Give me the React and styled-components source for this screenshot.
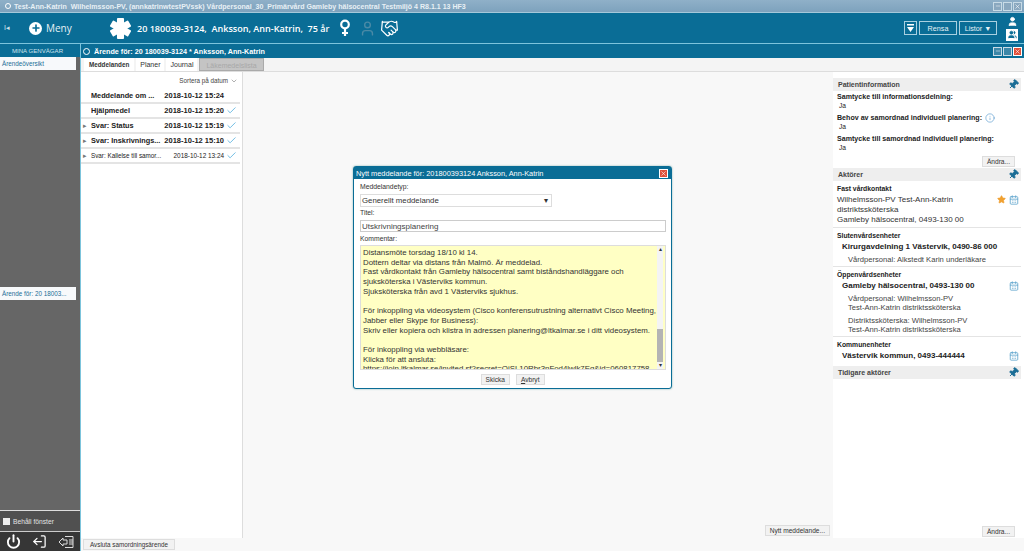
import styled, { createGlobalStyle } from 'styled-components';
import { Plus, Star, Info, Check, CalendarDays, Power, LogOut, User, Users, Handshake, Pin, X, Minus, ChevronDown } from 'lucide-react';

const GlobalStyle = createGlobalStyle`
  html, body { margin: 0; padding: 0; height: 100%; overflow: hidden; }
  body { font-family: "Liberation Sans", Arial, sans-serif; font-size: 8px; color: #222; background: #f7f7f7; }
  * { box-sizing: border-box; }
`;

const messages = [
  { title: 'Meddelande om ...', date: '2018-10-12 15:24', bold: true, arrow: false, check: false },
  { title: 'Hjälpmedel', date: '2018-10-12 15:20', bold: true, arrow: false, check: true },
  { title: 'Svar: Status', date: '2018-10-12 15:19', bold: true, arrow: true, check: true },
  { title: 'Svar: Inskrivnings...', date: '2018-10-12 15:10', bold: true, arrow: true, check: true },
  { title: 'Svar: Kallelse till samor...', date: '2018-10-12 13:24', bold: false, arrow: true, check: true },
];

const comment = [
  'Distansmöte torsdag 18/10 kl 14.',
  'Dottern deltar via distans från Malmö. Är meddelad.',
  'Fast vårdkontakt  från Gamleby hälsocentral samt biståndshandläggare och',
  'sjuksköterska i Västerviks kommun.',
  'Sjuksköterska från avd 1 Västerviks sjukhus.',
  '',
  'För inkoppling via videosystem (Cisco konferensutrustning alternativt Cisco Meeting,',
  'Jabber eller Skype for Business):',
  'Skriv eller kopiera och klistra in adressen planering@ltkalmar.se i ditt videosystem.',
  '',
  'För inkoppling via webbläsare:',
  'Klicka för att ansluta:',
  'https://join.ltkalmar.se/invited.sf?secret=QiSL10Rbr3nFod4lwlk7Eg&id=060817758',
];

const App = () => (
  <Page>
    <GlobalStyle />
    <TitleBar>
      <TitleText><Ring />Test-Ann-Katrin  Wilhelmsson-PV, (annkatrinwtestPVssk) Vårdpersonal_30_Primärvård Gamleby hälsocentral Testmiljö 4 R8.1.1 13 HF3</TitleText>
      <WindowButtons>
        <WindowButton $muted><Minus size={6} /></WindowButton>
        <WindowButton $muted />
        <WindowButton $muted><X size={7} /></WindowButton>
      </WindowButtons>
    </TitleBar>

    <Header>
      <Collapse>I◂</Collapse>
      <MenuButton>
        <MenuIcon><Plus size={10} strokeWidth={4} color="#0a6d96" /></MenuIcon>
        Meny
      </MenuButton>
      <StarOfLife viewBox="0 0 24 24">
        <g fill="#fff">
          <rect x="8.3" y="1" width="7.4" height="22" rx="1" />
          <rect x="8.3" y="1" width="7.4" height="22" rx="1" transform="rotate(60 12 12)" />
          <rect x="8.3" y="1" width="7.4" height="22" rx="1" transform="rotate(120 12 12)" />
        </g>
      </StarOfLife>
      <PatientName>20 180039-3124,  Anksson, Ann-Katrin,  75 år</PatientName>
      <HeaderIcons>
        <FemaleIcon width="12" height="18" viewBox="0 0 12 18" fill="none" stroke="#fff" strokeWidth="2.2">
          <circle cx="6" cy="5.5" r="3.8" />
          <path d="M6 9.5V17M3 14h6" />
        </FemaleIcon>
        <User size={17} color="#4a8aa6" />
        <Handshake size={19} color="#fff" strokeWidth={1.5} />
      </HeaderIcons>
      <HeaderActions>
        <FilterButton>
          <svg width="7" height="9" viewBox="0 0 7 9" fill="#fff">
            <rect width="7" height="1.5" />
            <path d="M0 3h7L3.5 8z" />
          </svg>
        </FilterButton>
        <ActionButton $width={38}>Rensa</ActionButton>
        <ActionButton $width={38}>Listor ▼</ActionButton>
        <UserStack>
          <User size={11} color="#fff" fill="#fff" />
          <UserBadge><Users size={9} color="#0a6d96" fill="#0a6d96" /></UserBadge>
        </UserStack>
      </HeaderActions>
    </Header>

    <Body>
      <Sidebar>
        <SidebarTitle>MINA GENVÄGAR</SidebarTitle>
        <SidebarItem>Ärendeöversikt</SidebarItem>
        <SidebarFill>
          <SidebarItem>Ärende för: 20 18003...</SidebarItem>
        </SidebarFill>
        <KeepWindow><KeepBox />Behåll fönster</KeepWindow>
        <SidebarFooter>
          <Power size={15} strokeWidth={3} color="#fff" />
          <LogOut size={15} strokeWidth={2} color="#fff" style={{ transform: 'scaleX(-1)' }} />
          <svg width="16" height="14" viewBox="0 0 16 14" fill="none" stroke="#ddd" strokeWidth="1">
            <path d="M1 7l4-4v2h4v4H5v2z" />
            <path d="M7 1.5h8v11H7M11 5h4M11 7h4M11 9h4" />
          </svg>
        </SidebarFooter>
      </Sidebar>

      <Main>
        <PanelHeader>
          <HeaderTitle><PanelRing />Ärende för: 20 180039-3124 * Anksson, Ann-Katrin</HeaderTitle>
          <WindowButtons>
            <WindowButton><Minus size={6} /></WindowButton>
            <WindowButton />
            <WindowButton $close><X size={7} /></WindowButton>
          </WindowButtons>
        </PanelHeader>
        <Tabs>
          <Tab $active>Meddelanden</Tab>
          <Tab>Planer</Tab>
          <Tab>Journal</Tab>
          <Tab $disabled>Läkemedelslista</Tab>
        </Tabs>
        <Content>
          <MessageColumn>
            <SortRow>Sortera på datum <ChevronDown size={8} color="#888" /></SortRow>
            {messages.map((m) => (
              <MessageRow key={m.date}>
                <Arrow>{m.arrow ? '▸' : ''}</Arrow>
                <MessageTitle $bold={m.bold}>{m.title}</MessageTitle>
                <MessageDate $bold={m.bold}>{m.date}</MessageDate>
                <CheckSlot>{m.check && <Check size={11} color="#3fa6da" strokeWidth={1.6} />}</CheckSlot>
              </MessageRow>
            ))}
          </MessageColumn>
          <Middle>
            <SmallButton>Nytt meddelande...</SmallButton>
          </Middle>
          <RightPanel>
            <SectionBar>Patientinformation<PinIcon /></SectionBar>
            <InfoLabel>Samtycke till informationsdelning:</InfoLabel>
            <InfoValue>Ja</InfoValue>
            <InfoLabel>Behov av samordnad individuell planering: <Info size={10} color="#2a7fc0" strokeWidth={1.2} style={{ marginLeft: 3 }} /></InfoLabel>
            <InfoValue>Ja</InfoValue>
            <InfoLabel>Samtycke till samordnad individuell planering:</InfoLabel>
            <InfoValue>Ja</InfoValue>
            <RightButtonRow><SmallButton>Ändra...</SmallButton></RightButtonRow>

            <SectionBar>Aktörer<PinIcon /></SectionBar>
            <Group>
              <GroupTitle>Fast vårdkontakt</GroupTitle>
              <ContactRow>
                <ContactText>
                  Wilhelmsson-PV Test-Ann-Katrin<br />distriktssköterska<br />Gamleby hälsocentral, 0493-130 00
                </ContactText>
                <Star size={9} color="#f0a030" fill="#f0a030" />
                <CalendarDays size={10} color="#5fa5cc" />
              </ContactRow>
            </Group>
            <Group>
              <GroupTitle>Slutenvårdsenheter</GroupTitle>
              <UnitName>Kirurgavdelning 1 Västervik, 0490-86 000</UnitName>
              <UnitPerson>Vårdpersonal: Alkstedt Karin underläkare</UnitPerson>
            </Group>
            <Group>
              <GroupTitle>Öppenvårdsenheter</GroupTitle>
              <ContactRow>
                <UnitName>Gamleby hälsocentral, 0493-130 00</UnitName>
                <CalendarDays size={10} color="#5fa5cc" />
              </ContactRow>
              <UnitPerson>Vårdpersonal: Wilhelmsson-PV<br />Test-Ann-Katrin distriktssköterska</UnitPerson>
              <UnitPerson>Distriktssköterska: Wilhelmsson-PV<br />Test-Ann-Katrin distriktssköterska</UnitPerson>
            </Group>
            <Group $last>
              <GroupTitle>Kommunenheter</GroupTitle>
              <ContactRow>
                <UnitName>Västervik kommun, 0493-444444</UnitName>
                <CalendarDays size={10} color="#5fa5cc" />
              </ContactRow>
            </Group>
            <SectionBar>Tidigare aktörer<PinIcon /></SectionBar>
            <RightSpacer />
            <RightButtonRow><SmallButton>Ändra...</SmallButton></RightButtonRow>
          </RightPanel>
        </Content>
        <Footer><FooterButton>Avsluta samordningsärende</FooterButton></Footer>
      </Main>
    </Body>

    <Dialog>
      <DialogTitle>
        Nytt meddelande för: 201800393124 Anksson, Ann-Katrin
        <WindowButton $close><X size={7} /></WindowButton>
      </DialogTitle>
      <DialogBody>
        <FieldLabel>Meddelandetyp:</FieldLabel>
        <TypeSelect>Generellt meddelande<span>▾</span></TypeSelect>
        <FieldLabel>Titel:</FieldLabel>
        <TitleInput>Utskrivningsplanering</TitleInput>
        <FieldLabel>Kommentar:</FieldLabel>
        <CommentBox>
          <CommentText>
            {comment.map((line, i) => <CommentLine key={i}>{line || '\u00a0'}</CommentLine>)}
          </CommentText>
          <Scrollbar>
            <ScrollEnd>▴</ScrollEnd>
            <ScrollThumb />
            <ScrollEnd>▾</ScrollEnd>
          </Scrollbar>
        </CommentBox>
        <DialogButtons>
          <SmallButton>Skicka</SmallButton>
          <SmallButton><u>A</u>vbryt</SmallButton>
        </DialogButtons>
      </DialogBody>
    </Dialog>
  </Page>
);

const PinIcon = () => (
  <PinWrap>
    <Pin size={11} color="#1a6d96" fill="#1a6d96" />
  </PinWrap>
);

const Page = styled.div`
  position: relative;
  width: 1024px;
  height: 551px;
  display: flex;
  flex-direction: column;
  overflow: hidden;
`;

const TitleBar = styled.div`
  height: 12px;
  background: linear-gradient(#8fb0c8, #7da2bd);
  display: flex;
  align-items: center;
  justify-content: space-between;
  padding: 0 2px 0 5px;
`;

const TitleText = styled.div`
  display: flex;
  align-items: center;
  gap: 3px;
  color: #e8f0f5;
  font-size: 7.05px;
  font-weight: 700;
  white-space: pre;
`;

const Ring = styled.span`
  width: 6px;
  height: 6px;
  border: 1px solid #fff;
  border-radius: 50%;
`;

const WindowButtons = styled.div`
  display: flex;
  gap: 1px;
`;

const WindowButton = styled.div`
  width: 9px;
  height: 9px;
  border: 1px solid ${(p) => (p.$close ? '#fff' : '#c8dbe6')};
  background: ${(p) => (p.$close ? '#e0503a' : p.$muted ? '#8aa8bf' : '#3c87a8')};
  color: #fff;
  display: flex;
  align-items: center;
  justify-content: center;
`;

const Header = styled.div`
  height: 32px;
  background: #0a6d96;
  border-top: 1px solid #a5c8da;
  border-bottom: 1px solid #7cc4dc;
  display: flex;
  align-items: center;
  padding-left: 4px;
`;

const Collapse = styled.div`
  width: 25px;
  color: #cfe3ec;
  font-size: 7px;
`;

const MenuButton = styled.div`
  display: flex;
  align-items: center;
  gap: 4px;
  color: #e6f1f5;
  font-size: 10px;
  font-family: "Open Sans", sans-serif;
  width: 80px;
`;

const MenuIcon = styled.span`
  width: 13px;
  height: 13px;
  border-radius: 50%;
  background: #fff;
  display: flex;
  align-items: center;
  justify-content: center;
`;

const StarOfLife = styled.svg`
  width: 23px;
  height: 23px;
  margin-right: 5px;
`;

const PatientName = styled.div`
  color: #fff;
  font-family: "Open Sans", sans-serif;
  font-weight: 600;
  font-size: 9.05px;
  white-space: pre;
  width: 199px;
`;

const HeaderIcons = styled.div`
  display: flex;
  align-items: center;
  gap: 4px;
  margin-left: 3px;
`;

const FemaleIcon = styled.svg`
  margin-right: 4px;
`;

const HeaderActions = styled.div`
  margin-left: auto;
  display: flex;
  align-items: center;
  gap: 2px;
  padding-right: 6px;
`;

const FilterButton = styled.div`
  width: 13px;
  height: 14px;
  border: 1px solid #a9d0e0;
  display: flex;
  align-items: center;
  justify-content: center;
`;

const ActionButton = styled.div`
  width: ${(p) => p.$width}px;
  height: 14px;
  border: 1px solid #a9d0e0;
  color: #e6f1f5;
  font-size: 7.2px;
  display: flex;
  align-items: center;
  justify-content: center;
`;

const UserStack = styled.div`
  display: flex;
  flex-direction: column;
  align-items: center;
  gap: 2px;
  margin-left: 7px;
`;

const UserBadge = styled.div`
  width: 12px;
  height: 12px;
  background: #fff;
  display: flex;
  align-items: center;
  justify-content: center;
`;

const Body = styled.div`
  flex: 1;
  display: flex;
  min-height: 0;
`;

const Sidebar = styled.div`
  width: 81px;
  display: flex;
  flex-direction: column;
  background: #666;
  border-right: 1px solid #7cc4dc;
`;

const SidebarTitle = styled.div`
  height: 13px;
  background: #0a6d96;
  color: #cfe3ec;
  font-size: 6.1px;
  text-align: center;
  line-height: 13px;
  padding-right: 5px;
`;

const SidebarItem = styled.div`
  height: 13px;
  margin-right: 4px;
  background: #f7f9fb;
  color: #1a6d96;
  font-size: 6.3px;
  line-height: 13px;
  padding-left: 2px;
  white-space: nowrap;
`;

const SidebarFill = styled.div`
  flex: 1;
  padding-top: 217px;
`;

const KeepWindow = styled.div`
  height: 21px;
  border-top: 1px solid #ddd;
  background: #505050;
  color: #e2e2e2;
  font-size: 6.7px;
  display: flex;
  align-items: center;
  gap: 3px;
  padding-left: 3px;
`;

const KeepBox = styled.span`
  width: 7px;
  height: 7px;
  background: #eee;
`;

const SidebarFooter = styled.div`
  height: 20px;
  background: #363636;
  border-top: 1px solid #ccc;
  display: flex;
  align-items: center;
  justify-content: space-around;
  padding-right: 1px;
`;

const Main = styled.div`
  flex: 1;
  display: flex;
  flex-direction: column;
  min-width: 0;
`;

const PanelHeader = styled.div`
  height: 14px;
  background: #0a6d96;
  display: flex;
  align-items: center;
  justify-content: space-between;
  padding: 0 2px 0 2px;
`;

const HeaderTitle = styled.div`
  display: flex;
  align-items: center;
  gap: 4px;
  color: #fff;
  font-size: 7.2px;
  font-weight: 700;
`;

const PanelRing = styled.span`
  width: 7px;
  height: 7px;
  border: 1.5px solid #fff;
  border-radius: 50%;
`;

const Tabs = styled.div`
  height: 14px;
  background: #f4f4f4;
  border-bottom: 1px solid #ddd;
  display: flex;
  align-items: flex-end;
  gap: 2px;
  padding-left: 3px;
`;

const Tab = styled.div`
  height: 13px;
  padding: 0 ${(p) => (p.$active ? 5 : p.$disabled ? 6 : 4)}px;
  line-height: 13px;
  font-size: ${(p) => (p.$active ? 6.3 : 7)}px;
  font-weight: ${(p) => (p.$active ? 700 : 400)};
  background: ${(p) => (p.$disabled ? '#c4c4c4' : '#fff')};
  color: ${(p) => (p.$disabled ? '#a8a8a8' : '#333')};
  border: ${(p) => (p.$disabled ? '1px solid #aaa' : 'none')};
`;

const Content = styled.div`
  flex: 1;
  display: flex;
  min-height: 0;
`;

const MessageColumn = styled.div`
  width: 162px;
  background: #fff;
  border-right: 1px solid #ddd;
  padding-top: 2px;
`;

const SortRow = styled.div`
  height: 13px;
  margin-bottom: 2px;
  display: flex;
  align-items: center;
  justify-content: flex-end;
  gap: 2px;
  padding-right: 4px;
  font-size: 6.3px;
  color: #444;
`;

const MessageRow = styled.div`
  height: 15px;
  display: flex;
  align-items: center;
  padding-left: 2px;
  margin-right: 2px;
  border-bottom: 2px solid #e4e4e4;
`;

const Arrow = styled.span`
  width: 8px;
  color: #777;
  font-size: 7px;
`;

const MessageTitle = styled.span`
  width: 72px;
  font-size: ${(p) => (p.$bold ? 7.3 : 6.3)}px;
  font-weight: ${(p) => (p.$bold ? 700 : 400)};
  white-space: nowrap;
  overflow: hidden;
`;

const MessageDate = styled.span`
  width: 62px;
  font-size: ${(p) => (p.$bold ? 7.5 : 6.4)}px;
  font-weight: ${(p) => (p.$bold ? 700 : 400)};
  white-space: nowrap;
  text-align: right;
  padding-right: 1px;
`;

const CheckSlot = styled.span`
  width: 12px;
  display: flex;
  justify-content: center;
`;

const Middle = styled.div`
  flex: 1;
  display: flex;
  align-items: flex-end;
  justify-content: flex-end;
  padding: 0 3px 2px 0;
  background: #f8f8f8;
`;

const RightPanel = styled.div`
  width: 191px;
  background: #fff;
  display: flex;
  flex-direction: column;
  padding: 6px 3px 0 0;
`;

const SectionBar = styled.div`
  height: 13px;
  flex-shrink: 0;
  background: #eeeeee;
  display: flex;
  align-items: center;
  justify-content: space-between;
  padding: 0 2px 0 5px;
  font-size: 7px;
  font-weight: 700;
  color: #444;
`;

const PinWrap = styled.span`
  display: flex;
  transform: rotate(45deg);
`;

const InfoLabel = styled.div`
  font-size: 7.1px;
  font-weight: 700;
  margin-top: 1px;
  padding-left: 4px;
  height: 10px;
  white-space: nowrap;
  display: flex;
  align-items: center;
`;

const InfoValue = styled.div`
  font-size: 6.6px;
  line-height: 8px;
  padding-left: 6px;
  height: 10px;
`;

const RightButtonRow = styled.div`
  display: flex;
  justify-content: flex-end;
  padding: 2px 6px 1px 0;
`;

const SmallButton = styled.div`
  display: inline-block;
  height: 11px;
  padding: 0 4px;
  line-height: 10px;
  border: 1px solid #ddd;
  background: #f2f2f2;
  font-size: 6.6px;
  color: #333;
  white-space: nowrap;
`;

const FooterButton = styled(SmallButton)`
  font-size: 6.3px;
  padding: 0 6px;
`;

const Group = styled.div`
  padding: 4px 2px ${(p) => (p.$last ? 5 : 1)}px 4px;
  border-bottom: ${(p) => (p.$last ? 'none' : '1px solid #e4e4e4')};
`;

const GroupTitle = styled.div`
  font-size: 6.8px;
  font-weight: 700;
  line-height: 8px;
  margin-bottom: 2px;
`;

const ContactRow = styled.div`
  display: flex;
  align-items: flex-start;
  gap: 3px;
`;

const ContactText = styled.div`
  flex: 1;
  font-size: 8px;
  line-height: 10px;
  margin-bottom: 1px;
  color: #333;
`;

const UnitName = styled.div`
  flex: 1;
  font-size: 8px;
  font-weight: 700;
  line-height: 10px;
  padding-left: 5px;
  color: #222;
`;

const UnitPerson = styled.div`
  font-size: 7.6px;
  line-height: 9.5px;
  color: #444;
  padding: 3px 0 0 11px;
`;

const RightSpacer = styled.div`
  flex: 1;
`;

const Footer = styled.div`
  height: 13px;
  background: #f8f8f8;
  padding: 1px 0 0 2px;
`;

const Dialog = styled.div`
  position: absolute;
  left: 353px;
  top: 166px;
  width: 319px;
  height: 223px;
  border: 1px solid #0a6d96;
  border-radius: 3px;
  background: #fff;
  display: flex;
  flex-direction: column;
  box-shadow: 0 0 2px #7aa;
`;

const DialogTitle = styled.div`
  height: 12px;
  background: #0a6d96;
  color: #fff;
  font-size: 7.35px;
  display: flex;
  align-items: center;
  justify-content: space-between;
  padding: 0 3px 0 2px;
`;

const DialogBody = styled.div`
  flex: 1;
  padding: 3px 6px 0 6px;
  display: flex;
  flex-direction: column;
`;

const FieldLabel = styled.div`
  font-size: 6.8px;
  height: 10px;
  line-height: 10px;
  color: #333;
`;

const TypeSelect = styled.div`
  width: 192px;
  height: 13px;
  margin: 2px 0 1px;
  border: 1px solid #ddd;
  font-size: 7.8px;
  line-height: 12px;
  padding-left: 1px;
  display: flex;
  justify-content: space-between;
  padding-right: 3px;
  color: #333;
`;

const TitleInput = styled.div`
  width: 306px;
  height: 12px;
  margin: 2px 0 2px;
  border: 1px solid #ccc;
  font-size: 8px;
  line-height: 11px;
  padding-left: 1px;
  color: #444;
`;

const CommentBox = styled.div`
  width: 306px;
  height: 125px;
  margin-top: 1px;
  background: #ffffc4;
  border: 1px solid #ddd;
  display: flex;
  overflow: hidden;
`;

const CommentText = styled.div`
  flex: 1;
  padding: 2px 0 0 2px;
  font-size: 7.85px;
  line-height: 9.7px;
  color: #333;
  white-space: nowrap;
  overflow: hidden;
`;

const CommentLine = styled.div``;

const Scrollbar = styled.div`
  width: 6px;
  background: #f4f4f4;
  display: flex;
  flex-direction: column;
  margin-right: 2px;
`;

const ScrollEnd = styled.div`
  height: 7px;
  font-size: 6px;
  line-height: 7px;
  text-align: center;
  color: #333;
`;

const ScrollThumb = styled.div`
  flex: 1;
  margin-top: 76px;
  background: #b4b4b4;
`;

const DialogButtons = styled.div`
  display: flex;
  justify-content: center;
  gap: 6px;
  padding-top: 4px;
`;

export default App;
